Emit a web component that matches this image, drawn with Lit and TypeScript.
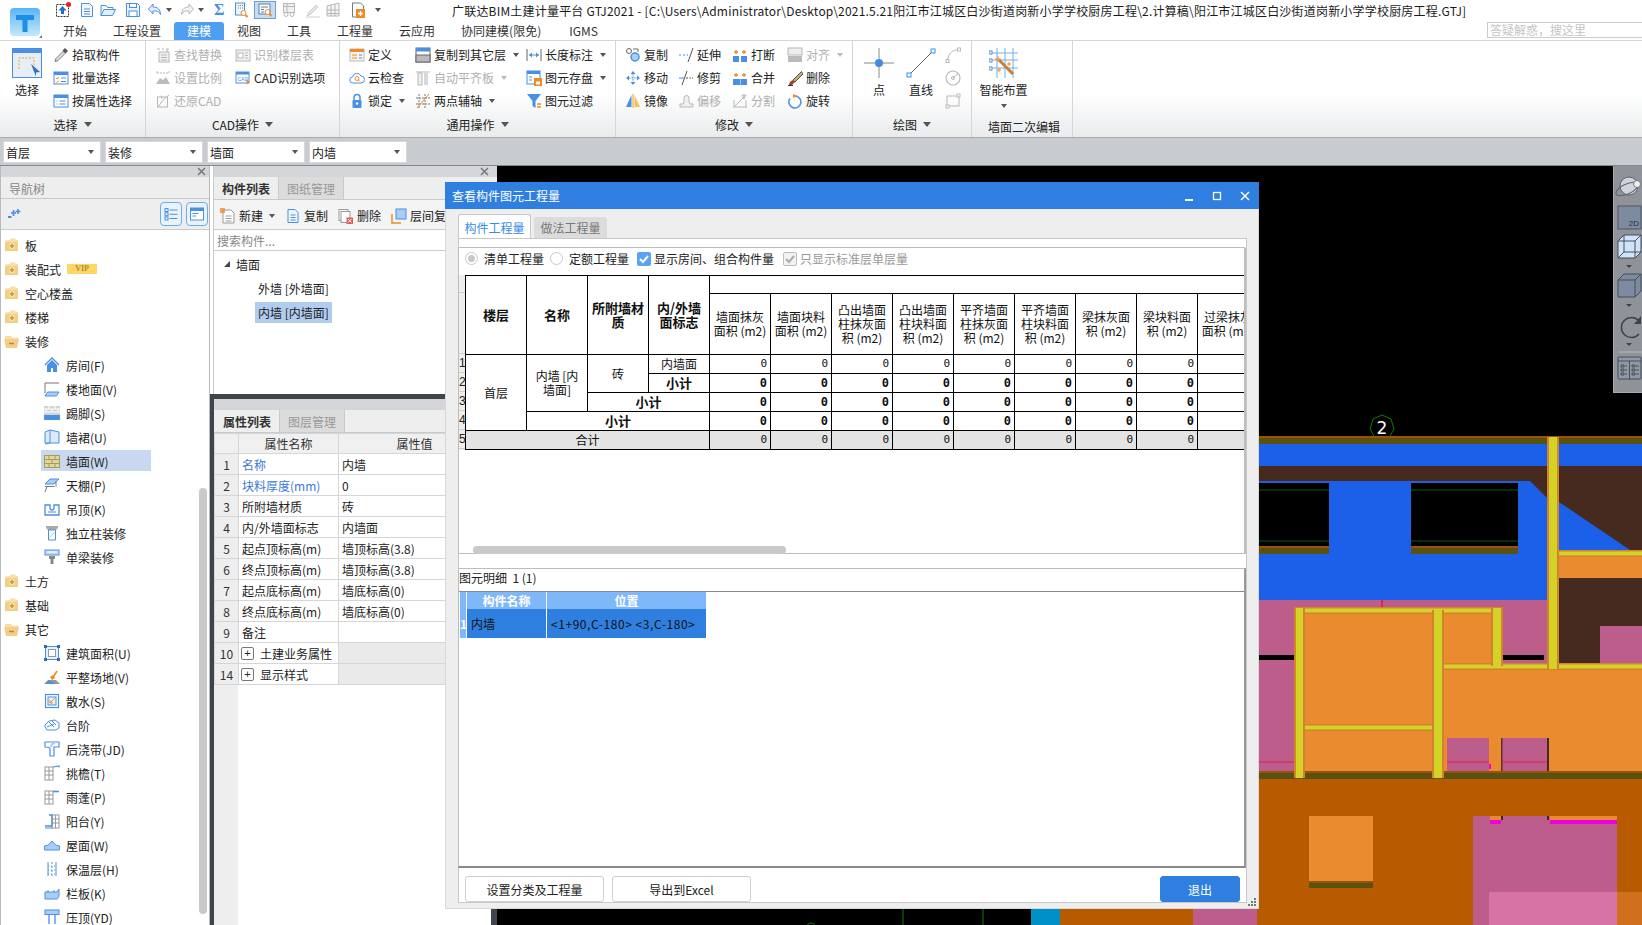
import { LitElement, html, svg, css, nothing } from "lit";
import { customElement } from "lit/decorators.js";

const B = "#4a90e2";
const L = "#a9cdf5";
const G = "#b8b8b8";
const O = "#f08a24";

// 16x16 icons, keyed by name
const ICONS: Record<string, unknown> = {
  upload: svg`<rect x="1.5" y="2.5" width="12" height="12" fill="#fff" stroke="#333" stroke-dasharray="2 1"/><path d="M7.5 4l4 4.5H9V12H6V8.5H3.5z" fill="#1a6fd4"/><circle cx="13.5" cy="2.5" r="2.5" fill="#e81c24"/>`,
  newdoc: svg`<path d="M2.5 1.5h8l3 3v10h-11z" fill="#f4f8fd" stroke="${B}"/><path d="M5 7h6M5 9.5h6M5 12h6" stroke="${B}"/>`,
  open: svg`<path d="M1 13.5v-10h5l1.5 2H13v2" fill="none" stroke="${B}"/><path d="M1 13.5l3-6h11.5l-3 6z" fill="#e4effb" stroke="${B}"/>`,
  save: svg`<path d="M1.5 1.5h11l2 2v11h-13z" fill="#eaf2fb" stroke="${B}"/><rect x="4.5" y="1.5" width="7" height="4" fill="#fff" stroke="${B}"/><rect x="4" y="9" width="8" height="5.5" fill="#fff" stroke="${B}"/>`,
  undo: svg`<path d="M6 2L1.5 7 6 12V9c4-.5 6 .5 7.5 3.5C13.5 7.5 10.5 5 6 5z" fill="#e6f0fb" stroke="${B}"/>`,
  redo: svg`<path d="M10 2l4.5 5L10 12V9C6 8.5 4 9.5 2.5 12.5 2.5 7.5 5.5 5 10 5z" fill="#f4f4f4" stroke="${G}"/>`,
  docfind: svg`<rect x="2.5" y="1" width="9" height="12" fill="#eef4fb" stroke="${B}"/><path d="M5 3.5h1M7 3.5h1M9 3.5h1M5 6h1M7 6h1M9 6h1" stroke="#6a87a8"/><circle cx="10.5" cy="11" r="2.5" fill="#fff" stroke="${O}"/><path d="M12.5 13l2 2" stroke="${O}" stroke-width="2"/>`,
  docfindA: svg`<rect x="2" y="2" width="11" height="10" fill="#fff" stroke="#5c7fa5"/><path d="M4 5h7M4 7.5h3M4 10h3" stroke="#5c7fa5"/><circle cx="10.5" cy="10" r="2.5" fill="#fff" stroke="${O}"/><path d="M12.5 12l2 2" stroke="${O}" stroke-width="2"/>`,
  glasses: svg`<rect x="2.5" y="1.5" width="11" height="9" fill="#f0f0f0" stroke="${G}"/><path d="M2.5 4.5h11M6 1.5v9" stroke="${G}"/><circle cx="5" cy="12.5" r="2" fill="#fff" stroke="${G}"/><circle cx="11" cy="12.5" r="2" fill="#fff" stroke="${G}"/>`,
  pencilG: svg`<path d="M2 14l2-4 7-7 2 2-7 7z" fill="#e4e4e4" stroke="#cfcfcf"/><path d="M1 15h14" stroke="#cfcfcf"/>`,
  gridG: svg`<path d="M2 4l12-3v13H2zM2 8h12M2 11.5h12M6 3v11M10 2v12" fill="#f4f4f4" stroke="${G}"/>`,
  orangedoc: svg`<path d="M2.5 1h8l3 3v4h-4v7h-7z" fill="#fff" stroke="#777"/><rect x="6" y="7" width="9" height="9" fill="${O}"/><path d="M10.5 9v5M8 11.5h5" stroke="#fff" stroke-width="1.5"/>`,
  pick: svg`<path d="M2 14.5l1-3 7-7 2 2-7 7z" fill="#e2e2e2" stroke="#777"/><path d="M9.5 3.5L12 1l3 3-2.5 2.5z" fill="#555"/>`,
  batch: svg`<rect x="1" y="2" width="14" height="12" fill="#fff" stroke="${B}"/><rect x="1" y="2" width="14" height="3" fill="${B}"/><path d="M3 8l1 1 2-2M3 11.5l1 1 2-2" fill="none" stroke="${O}"/><path d="M8 8h5M8 11.5h5" stroke="${B}"/>`,
  attr: svg`<rect x="1" y="2" width="14" height="12" fill="#fff" stroke="${B}"/><rect x="1" y="2" width="14" height="3" fill="${B}"/><path d="M3.5 8h1M3.5 11h1M6.5 8h6M6.5 11h6" stroke="${B}"/>`,
  findrep: svg`<path d="M2 2h3M7 2h2M11 2h3" stroke="${G}"/><path d="M12 2v3" stroke="${G}"/><rect x="4" y="5" width="10" height="10" fill="#eee" stroke="${G}"/><path d="M6 8h6M6 10.5h6M6 13h6" stroke="${G}"/>`,
  floortbl: svg`<rect x="1" y="3" width="14" height="11" fill="#f2f2f2" stroke="${G}"/><rect x="3" y="6" width="5" height="5" fill="#fff" stroke="${G}"/><path d="M10 6h3M10 8.5h3M10 11h3" stroke="${G}"/>`,
  scale: svg`<path d="M2 1v3M14 1v3M2 3h12" stroke="${G}" stroke-dasharray="2 1"/><path d="M1 14l4-6 3 2 3-3 4 7z" fill="#bcbcbc"/>`,
  cadopt: svg`<rect x="1" y="2" width="13" height="11" fill="#fff" stroke="${B}"/><rect x="1" y="2" width="13" height="2.5" fill="${B}"/><text x="2.5" y="10.5" font-size="5" font-family="Liberation Sans" fill="${B}">CAD</text><path d="M11 9l4 3-2 .5-1 2.5z" fill="${O}"/>`,
  restore: svg`<rect x="2.5" y="4" width="10" height="10" fill="none" stroke="${G}"/><path d="M14 2L8 7 3 14" fill="none" stroke="${G}"/><path d="M8 4L6 2v4z" fill="${G}"/>`,
  define: svg`<rect x="1" y="2" width="14" height="12" fill="#f4f4f4" stroke="#bbb"/><rect x="1" y="2" width="14" height="3" fill="${O}"/><path d="M3 8h5M3 11h5" stroke="${O}"/><path d="M10 8h3M10 11h3" stroke="${B}"/>`,
  cloud: svg`<path d="M4 13a3 3 0 0 1-.5-6 4.5 4.5 0 0 1 8.5-1 3.5 3.5 0 0 1 0 7z" fill="#fff" stroke="${B}"/><circle cx="8" cy="8.5" r="2" fill="none" stroke="${O}"/><path d="M9.5 10l1.5 1.5" stroke="${O}"/>`,
  lock: svg`<path d="M5 7V4.5a3 3 0 0 1 6 0V7" fill="none" stroke="${B}" stroke-width="1.5"/><rect x="3.5" y="7" width="9" height="8" rx="1" fill="${B}"/><circle cx="8" cy="10.5" r="1.2" fill="#fff"/>`,
  copyfloor: svg`<rect x="1" y="1" width="14" height="14" fill="#fff" stroke="#666"/><rect x="1" y="1" width="14" height="3.5" fill="${B}"/><rect x="1" y="8" width="14" height="7" fill="#bbb" stroke="#666"/>`,
  autoalign: svg`<path d="M1 2h14" stroke="${G}"/><rect x="3" y="3" width="4" height="12" fill="#eee" stroke="${G}"/><rect x="9" y="3" width="4" height="12" fill="#d8d8d8"/>`,
  twoaxis: svg`<path d="M1 5h14M1 11h14M4 1v14M10 1v14" stroke="#777" stroke-dasharray="2 1"/><path d="M2 15L14 1" stroke="${O}"/>`,
  dim: svg`<path d="M1 2v12M15 2v12" stroke="#666"/><path d="M3 8h10" stroke="${B}"/><path d="M3 8l3-2.5v5zM13 8l-3-2.5v5z" fill="${B}"/>`,
  store: svg`<rect x="1" y="1" width="13" height="13" fill="#fff" stroke="${B}"/><rect x="1" y="1" width="13" height="3" fill="${B}"/><path d="M3 7h3M3 10h3" stroke="${B}"/><rect x="8" y="8" width="8" height="8" fill="${O}"/><rect x="10" y="11.5" width="4" height="3" fill="#fff"/>`,
  filter: svg`<path d="M1 1h14L9.5 8v7l-3-2V8z" fill="${B}"/><path d="M11 11h4M11 14h4" stroke="${O}" stroke-width="1.5"/>`,
  copy: svg`<circle cx="4" cy="4" r="2.5" fill="none" stroke="#666"/><circle cx="10" cy="10" r="4" fill="${L}" stroke="${B}" stroke-width="1.5"/><path d="M8 2h5v3" fill="none" stroke="#666"/>`,
  extend: svg`<path d="M1 8h2M5 8h2M8.5 8H10" stroke="${B}"/><path d="M10 15l5-14" stroke="#555"/>`,
  breakI: svg`<rect x="1" y="9" width="6" height="6" fill="${B}"/><rect x="9" y="9" width="6" height="6" fill="${B}"/><path d="M4 3v4M2 5h4M12 3v4M10 5h4" stroke="${O}" stroke-width="1.3"/>`,
  align: svg`<rect x="1" y="1" width="14" height="7" fill="#eee" stroke="${G}"/><rect x="1" y="9" width="14" height="6" fill="#bbb"/>`,
  move: svg`<path d="M8 1l2.5 3h-5zM8 15l2.5-3h-5zM1 8l3-2.5v5zM15 8l-3-2.5v5z" fill="${B}"/><path d="M8 4v8M4 8h8" stroke="${B}" stroke-dasharray="1.5 1"/>`,
  trim: svg`<path d="M8 8h2M11.5 8H13M14 8h1" stroke="#555"/><path d="M1 8h5" stroke="${B}"/><path d="M4 15L9 1" stroke="#555"/>`,
  merge: svg`<rect x="1" y="9" width="7" height="6" fill="${B}"/><rect x="8.5" y="9" width="6.5" height="6" fill="${B}"/><path d="M4 3v4M2 5h4M12 3v4M10 5h4" stroke="${O}" stroke-width="1.3"/>`,
  erase: svg`<path d="M14.5 1.5L6 10l2 2 8-8z" fill="#c8a878" stroke="#555"/><path d="M6 10l2 2-3 3H2c0-2 1-4 4-5z" fill="#a8441a"/><path d="M1 15.5h5" stroke="#333"/>`,
  mirror: svg`<path d="M1 14L6.5 2v12z" fill="${B}"/><path d="M9.5 2L15 14H9.5z" fill="#f6c350"/><path d="M8 1v14" stroke="#e8a020"/>`,
  offset: svg`<path d="M2 14v-3h3l1-2V5a2.5 2.5 0 0 1 5 0v4l1 2h3v3z" fill="#f0f0f0" stroke="${G}"/>`,
  split: svg`<path d="M1 14h14M2 7v7M14 7v7M2 14L14 2" stroke="${G}"/><path d="M10 2h4l-2 4z" fill="#ddd" stroke="${G}"/>`,
  rotate: svg`<path d="M8 3a6 6 0 1 1-5 2.5" fill="none" stroke="${B}" stroke-width="1.5"/><path d="M6 1l5 2-5 2z" fill="${O}"/>`,
  arcS: svg`<path d="M2.5 14C3 6 8 3 13.5 2.5" fill="none" stroke="${G}"/><rect x="1" y="12.5" width="3" height="3" fill="#fff" stroke="${G}"/><rect x="12.5" y="1" width="3" height="3" fill="#fff" stroke="${G}"/>`,
  circS: svg`<circle cx="8" cy="8" r="7" fill="#fff" stroke="${G}" stroke-width="1.2"/><circle cx="8" cy="8" r="1.5" fill="none" stroke="${G}"/><path d="M8 8l5-4" stroke="${G}"/>`,
  rectS: svg`<rect x="2" y="3" width="12" height="10" fill="none" stroke="${G}"/><rect x="1" y="12" width="3" height="3" fill="#fff" stroke="${G}"/><rect x="12" y="1" width="3" height="3" fill="#fff" stroke="${G}"/>`,
  pin: svg`<path d="M6.5 4v6M4 7h5M11 3v5M8.5 5.5h5" stroke="${B}" stroke-width="1.6"/><path d="M1 10h3.5v2H1z" fill="${B}"/>`,
  listBtn: svg`<rect x="2" y="2.5" width="3" height="3" fill="none" stroke="${B}"/><rect x="2" y="6.8" width="3" height="3" fill="none" stroke="${B}"/><rect x="2" y="11" width="3" height="3" fill="none" stroke="${B}"/><path d="M6.5 4h8M6.5 8.3h8M6.5 12.5h8" stroke="${B}"/>`,
  formBtn: svg`<rect x="1.5" y="2" width="13" height="12" fill="#fff" stroke="${B}"/><rect x="1.5" y="2" width="13" height="3" fill="${B}"/><path d="M3.5 7.5h6M3.5 10H7" stroke="${B}"/>`,
  folderC: svg`<path d="M1 4.5V14h13V4.5z" fill="#f2cf84"/><path d="M1 4.5L2 3h4l1-1.5h4L12 3h2v1.5z" fill="#f6deaa"/><rect x="5.5" y="6" width="5" height="6" fill="#f8e2ac"/><path d="M6 9h4M8 7v4" stroke="#c39a3e" stroke-width="1.5"/>`,
  folderO: svg`<path d="M1 3h6l1 1.5h6V7H1z" fill="#f6deaa"/><path d="M0 6h15l-2 9H2z" fill="#f2cf84"/><path d="M5 10.5h5" stroke="#b08c3c" stroke-width="1.5"/>`,
  room: svg`<path d="M1 8l7-7 7 7" fill="none" stroke="${B}" stroke-width="1.3"/><path d="M3 8v7h4v-4h2v4h4V8L8 3z" fill="${B}"/>`,
  floor: svg`<path d="M1 12V2h14" fill="none" stroke="#777"/><path d="M3.5 11H15l-2.5 4H1z" fill="${L}" stroke="${B}"/>`,
  skirt: svg`<rect x="0" y="1" width="16" height="9" fill="#d4d4d4"/><path d="M0 4h16M0 7h16M5 1v3M11 1v3M2 4v3M8 4v3M14 4v3" stroke="#fff"/><rect x="0" y="10" width="16" height="5" fill="${B}"/>`,
  dado: svg`<path d="M1 3l5-2 9 2v11H1z" fill="#dce9f9" stroke="${B}"/><path d="M6 1v13l-5 1" fill="none" stroke="${B}"/>`,
  wall: svg`<rect x=".5" y="2.5" width="15" height="12" fill="#d8d8a8" stroke="#b09a4e"/><path d="M.5 6.5h15M.5 10.5h15M5 2.5v4M11 2.5v4M8 6.5v4M5 10.5v4M11 10.5v4" stroke="#b09a4e"/>`,
  ceiling: svg`<path d="M1 7l5-5h9l-5 5z" fill="${L}" stroke="${B}"/><path d="M1 9.5h9.5M3 9.5L1 15M12 4v5.5" stroke="#777"/>`,
  suspend: svg`<path d="M1 4h5v3a2 2 0 0 0 4 0V4h5v10H1z" fill="#fff" stroke="${B}" stroke-width="1.3"/><path d="M4 11h8" stroke="${B}"/>`,
  column: svg`<path d="M2 1h12v2l-2 2H4L2 3z" fill="#aaa"/><path d="M4.5 5h7v10h-7z" fill="#fff" stroke="${B}"/><path d="M5 13l6-6" stroke="${L}"/>`,
  beam: svg`<rect x="1" y="1" width="14" height="5" fill="#c4d8f0" stroke="${B}"/><path d="M3 3h10" stroke="#fff"/><rect x="5" y="7" width="6" height="3" fill="#888"/><rect x="6.5" y="10" width="3" height="5" fill="#888"/>`,
  area: svg`<rect x="1.5" y="1.5" width="13" height="13" fill="#e6f0fb" stroke="${B}"/><rect x="4.5" y="4.5" width="7" height="7" fill="#fff" stroke="#999"/><rect x="0" y="0" width="3" height="3" fill="#3768a8"/><rect x="13" y="0" width="3" height="3" fill="#3768a8"/><rect x="0" y="13" width="3" height="3" fill="#3768a8"/><rect x="13" y="13" width="3" height="3" fill="#3768a8"/>`,
  level: svg`<path d="M0 15h16l-4-4H4z" fill="#999"/><path d="M1 15l4-4 3 2 4 2z" fill="${B}"/><path d="M8 10l5-8" stroke="${O}" stroke-width="1.6"/><path d="M6 8l3-2 2 3-3 2z" fill="${O}"/>`,
  apron: svg`<rect x="1.5" y="1.5" width="13" height="13" fill="#fff" stroke="${B}" stroke-width="1.2"/><rect x="4" y="4" width="8" height="8" fill="#e6f0fb" stroke="${B}"/><path d="M10.5 5.5L6 10M6 7v3h3" fill="none" stroke="${O}"/>`,
  step: svg`<path d="M1 8l4-4 6-1 4 3v5l-3 2H3l-2-3z" fill="#fff" stroke="${B}"/><path d="M5 5l5 5M8 4l4 4M3 10l7-3" stroke="${B}"/>`,
  strip: svg`<path d="M1 1h14v5H10v9H6V8C6 6 4 6 1 6z" fill="#fff" stroke="${B}" stroke-width="1.2"/><path d="M7 6c0-2 2-4 4-4" stroke="${L}" stroke-width="2" fill="none"/>`,
  eave: svg`<rect x="1" y="2" width="8" height="13" fill="#fff" stroke="#999"/><path d="M5 2v13M1 6h8M1 10h8" stroke="#999"/><path d="M9 2l6-1v1.5" fill="none" stroke="${B}" stroke-width="1.2"/>`,
  canopy: svg`<rect x="1" y="2" width="8" height="13" fill="#fff" stroke="#999"/><path d="M5 2v13M1 6h8M1 10h8" stroke="#999"/><path d="M9 2.5h6" stroke="${B}" stroke-width="1.6"/>`,
  balcony: svg`<rect x="8" y="2" width="7" height="13" fill="#fff" stroke="#999"/><path d="M11.5 2v13M8 6h7M8 10h7" stroke="#999"/><path d="M5 2h3v11H1" fill="none" stroke="${B}" stroke-width="1.4"/><path d="M1 15h7" stroke="${B}"/>`,
  roof: svg`<path d="M.5 13V9l4-1L8 4l3.5 4 4 1v4z" fill="${L}" stroke="${B}"/>`,
  insul: svg`<path d="M4 1v14M12 1v14" stroke="${B}"/><path d="M8 1v14" stroke="${B}" stroke-dasharray="2 2"/><path d="M4 5h8M4 9h8M4 13h8" stroke="${B}" stroke-dasharray="1 2"/>`,
  panel: svg`<path d="M1 7h12c1-2 2-3 2-3v7c-1 1-1 3-2 3H1z" fill="${L}" stroke="${B}"/><path d="M4 7V5M10 7V5" stroke="${B}"/>`,
  coping: svg`<rect x="1" y="1" width="14" height="4.5" fill="${L}" stroke="${B}"/><path d="M5 5.5V15M11 5.5V15" stroke="${B}" stroke-width="1.3"/>`,
  newI: svg`<path d="M3 2h8l3 3v10H3z" fill="#fff" stroke="#999"/><path d="M5.5 8h6M5.5 10.5h6M5.5 13h6" stroke="#999"/><rect x="0" y="0" width="5" height="5" fill="${O}" opacity=".75"/>`,
  copyI: svg`<path d="M3 1.5h7l3 3v10H3z" fill="#f0f6fd" stroke="${B}"/><path d="M5.5 7h5M5.5 9.5h5M5.5 12h5" stroke="${B}"/>`,
  delI: svg`<rect x="1" y="1.5" width="9" height="11" fill="#fff" stroke="#999"/><rect x="3" y="3.5" width="9" height="11" fill="#fff" stroke="#999"/><rect x="8.5" y="9.5" width="6.5" height="6.5" fill="#e05a5a"/><path d="M10 11l3.5 3.5M13.5 11L10 14.5" stroke="#fff"/>`,
  layerI: svg`<path d="M1 6v9h9" fill="none" stroke="${O}" stroke-width="1.5"/><rect x="5" y="1" width="10" height="10" fill="#a8ccf5" stroke="${B}"/>`,
};

const ico = (name: string, cls = "i") =>
  html`<svg class=${cls} viewBox="0 0 16 16" aria-hidden="true">${ICONS[name]}</svg>`;

const closeX = html`<svg class="x" viewBox="0 0 9 9" aria-hidden="true">
  <path d="M1 1l7 7M8 1L1 8" stroke="#777" stroke-width="1.5" />
</svg>`;

const BASE = css`
  :host,
  * {
    box-sizing: border-box;
  }
  .i {
    width: 16px;
    height: 16px;
    flex: none;
    display: block;
  }
  .caret {
    display: inline-block;
    flex: none;
    width: 0;
    height: 0;
    border-left: 3px solid transparent;
    border-right: 3px solid transparent;
    border-top: 4px solid #555;
  }
`;

type RibbonItem = { i: string; t: string; off?: boolean; caret?: boolean } | null;

const QUICK: string[] = [
  "upload", "newdoc", "open", "save", "undo", "@", "redo", "@", "#", "docfind", "docfindA", "glasses", "pencilG", "gridG", "orangedoc", "@",
];

const MENU = ["开始", "工程设置", "建模", "视图", "工具", "工程量", "云应用", "协同建模(限免)", "IGMS"];

const SEL: RibbonItem[] = [
  { i: "pick", t: "拾取构件" },
  { i: "batch", t: "批量选择" },
  { i: "attr", t: "按属性选择" },
];
const CAD: RibbonItem[] = [
  { i: "findrep", t: "查找替换", off: true },
  { i: "scale", t: "设置比例", off: true },
  { i: "restore", t: "还原CAD", off: true },
  { i: "floortbl", t: "识别楼层表", off: true },
  { i: "cadopt", t: "CAD识别选项" },
  null,
];
const COMMON: RibbonItem[] = [
  { i: "define", t: "定义" },
  { i: "cloud", t: "云检查" },
  { i: "lock", t: "锁定", caret: true },
  { i: "copyfloor", t: "复制到其它层", caret: true },
  { i: "autoalign", t: "自动平齐板", off: true, caret: true },
  { i: "twoaxis", t: "两点辅轴", caret: true },
  { i: "dim", t: "长度标注", caret: true },
  { i: "store", t: "图元存盘", caret: true },
  { i: "filter", t: "图元过滤" },
];
const MODIFY: RibbonItem[] = [
  { i: "copy", t: "复制" },
  { i: "move", t: "移动" },
  { i: "mirror", t: "镜像" },
  { i: "extend", t: "延伸" },
  { i: "trim", t: "修剪" },
  { i: "offset", t: "偏移", off: true },
  { i: "breakI", t: "打断" },
  { i: "merge", t: "合并" },
  { i: "split", t: "分割", off: true },
  { i: "align", t: "对齐", off: true, caret: true },
  { i: "erase", t: "删除" },
  { i: "rotate", t: "旋转" },
];

@customElement("ribbon-bar")
export class RibbonBar extends LitElement {
  static styles = [
    BASE,
    css`
      :host {
        display: block;
        font-size: 12px;
        color: #222;
      }
      .top {
        display: flex;
        height: 41px;
        background: #fff;
        border-bottom: 1px solid #d4d6d8;
      }
      .logo {
        width: 49px;
        flex: none;
        padding: 8px 0 0 10px;
      }
      .logo svg {
        display: block;
        width: 33px;
        height: 31px;
      }
      .head {
        flex: 1;
        min-width: 0;
      }
      .row1 {
        display: flex;
        height: 22px;
        align-items: center;
        padding: 0 0 2px 6px;
      }
      .quick {
        display: grid;
        grid-template-columns: 24px 21px 25px 22px 19px 13px 19px 16px 19px 21px 27px 24px 20px 25px 25px 22px;
        width: 397px;
        flex: none;
        align-items: center;
      }
      .sigma {
        font: bold 16px "Liberation Serif", serif;
        color: #4a90e2;
      }
      .on {
        width: 22px;
        height: 18px;
        background: #c5dcf5;
        border: 1px solid #6f9fd0;
        display: flex;
        align-items: center;
        justify-content: center;
      }
      .title {
        white-space: nowrap;
        font-size: 12px;
        letter-spacing: 0.2px;
        color: #1a1a1a;
      }
      .row2 {
        display: flex;
        height: 18px;
        align-items: stretch;
        padding-left: 1px;
      }
      .menu {
        padding: 0 13px;
        line-height: 18px;
        color: #333;
      }
      .menu.active {
        background: #4f9ff0;
        color: #fff;
        border-radius: 3px 3px 0 0;
        width: 50px;
      }
      .menu.last {
        padding-left: 15px;
      }
      .search {
        margin-left: auto;
        width: 155px;
        border: 1px solid #ccc;
        border-right: 0;
        margin-bottom: 2px;
        color: #c4c4c4;
        line-height: 14px;
        padding-left: 2px;
      }
      .ribbon {
        display: flex;
        height: 97px;
        background: linear-gradient(#fff 55%, #e9ebec);
        border-bottom: 1px solid #a8abae;
      }
      .grp {
        position: relative;
        flex: none;
        display: flex;
        flex-direction: column;
        padding-top: 2px;
        border-right: 1px solid #d4d6d8;
      }
      .body {
        height: 69px;
        display: grid;
        grid-auto-flow: column;
        grid-template-rows: repeat(3, 23px);
        justify-content: start;
      }
      .g-sel {
        width: 146px;
      }
      .g-sel .body {
        padding-left: 12px;
        grid-template-columns: 41px auto;
      }
      .g-cad {
        width: 194px;
      }
      .g-cad .body {
        padding-left: 9px;
        grid-template-columns: 80px auto;
      }
      .g-com {
        width: 276px;
      }
      .g-com .body {
        padding-left: 9px;
        grid-template-columns: 66px 111px auto;
      }
      .g-mod {
        width: 237px;
      }
      .g-mod .body {
        padding-left: 9px;
        grid-template-columns: 53px 54px 55px auto;
      }
      .g-draw {
        width: 119px;
      }
      .g-draw .body {
        padding-left: 11px;
        grid-template-columns: 42px 39px auto;
      }
      .g-smart {
        width: 101px;
      }
      .g-smart .body {
        padding-left: 7px;
      }
      .it {
        display: flex;
        align-items: center;
        gap: 3px;
        white-space: nowrap;
      }
      .it .caret {
        margin-left: 4px;
      }
      .off {
        color: #b0b0b0;
      }
      .off .caret {
        border-top-color: #bbb;
      }
      .big {
        grid-row: 1 / span 3;
        display: flex;
        flex-direction: column;
        align-items: center;
        padding-top: 5px;
        width: 30px;
      }
      .big svg {
        width: 30px;
        height: 30px;
        display: block;
        flex: none;
      }
      .big span {
        margin-top: 3px;
        white-space: nowrap;
        line-height: 17px;
      }
      .g-smart .big {
        width: 49px;
      }
      .g-smart .big .caret {
        margin-top: 6px;
      }
      .lab {
        height: 24px;
        display: flex;
        align-items: center;
        justify-content: center;
        gap: 6px;
      }
      .lab .caret {
        border-left-width: 4px;
        border-right-width: 4px;
        border-top-width: 5px;
      }
      .g-smart .lab {
        padding: 5px 0 0 4px;
      }
      .smalls {
        grid-row: 1 / span 3;
        display: grid;
        grid-template-rows: repeat(3, 23px);
        align-items: center;
      }
      .bar {
        height: 28px;
        background: #c8cbcf;
        border-bottom: 1px solid #85888c;
        display: flex;
        gap: 4px;
        padding: 3px 0 0 3px;
      }
      .combo {
        width: 98px;
        height: 22px;
        background: #fff;
        border: 1px solid #d8d8d8;
        display: flex;
        align-items: center;
        justify-content: space-between;
        padding: 0 6px 0 2px;
      }
    `,
  ];

  item(it: RibbonItem) {
    if (!it) return html`<div></div>`;
    return html`<div class="it ${it.off ? "off" : ""}">
      ${ico(it.i)}<span>${it.t}</span>${it.caret ? html`<i class="caret"></i>` : nothing}
    </div>`;
  }

  quick(q: string) {
    if (q === "@") return html`<i class="caret"></i>`;
    if (q === "#") return html`<span class="sigma">Σ</span>`;
    if (q === "docfindA") return html`<div class="on">${ico("docfindA")}</div>`;
    return ico(q);
  }

  group(cls: string, label: string, items: RibbonItem[], lead: unknown = nothing) {
    return html`<div class="grp ${cls}">
      <div class="body">${lead}${items.map((i) => this.item(i))}</div>
      <div class="lab">${label}<i class="caret"></i></div>
    </div>`;
  }

  render() {
    const selectIcon = svg`<rect x=".5" y=".5" width="29" height="29" fill="#e8eef8" stroke="#4a90e2"/><rect x="0" y="0" width="30" height="5" fill="#4a90e2"/><path d="M7 21V10h15v8" fill="none" stroke="#f0a030" stroke-dasharray="2 1.5"/><path d="M19 16l9 8-4 .5v4z" fill="#3070c0"/>`;
    const pointIcon = svg`<path d="M15 0v30M0 15h30" stroke="#888"/><circle cx="15" cy="15" r="4" fill="#3f8fe0"/>`;
    const lineIcon = svg`<path d="M3 27L27 3" stroke="#666"/><rect x="1" y="25" width="4" height="4" fill="#fff" stroke="#3f8fe0"/><rect x="25" y="1" width="4" height="4" fill="#fff" stroke="#3f8fe0"/>`;
    const smartIcon = svg`<path d="M1 5h28M1 12h28M1 20h28M8 0v30M16 0v30M24 0v30" stroke="#6faee8"/><path d="M10 12l14 14" stroke="#c88030" stroke-width="3"/><path d="M9 8v6M6 11h6M18 16h4M20 14v4M8 22h4M10 20v4" stroke="#f08a24"/><rect x="0" y="3" width="3" height="3" fill="#fff" stroke="#4a90e2"/><rect x="0" y="11" width="3" height="3" fill="#fff" stroke="#4a90e2"/><rect x="0" y="19" width="3" height="3" fill="#fff" stroke="#4a90e2"/>`;
    return html`
      <div class="top">
        <div class="logo">
          <svg viewBox="0 0 33 31" aria-hidden="true">
            <defs>
              <linearGradient id="lg" x1="0" y1="0" x2="0" y2="1">
                <stop offset="0" stop-color="#58b4f4" />
                <stop offset="1" stop-color="#c4e9fc" />
              </linearGradient>
            </defs>
            <rect width="30" height="28" rx="4" fill="url(#lg)" />
            <path d="M6 7h18v5h-6.5v12h-5V12H6z" fill="#1c8ee8" />
            <path d="M32 27v3h-3z" fill="#777" />
          </svg>
        </div>
        <div class="head">
          <div class="row1">
            <div class="quick">${QUICK.map((q) => this.quick(q))}</div>
            <div class="title">
              广联达BIM土建计量平台 GTJ2021 - [C:\\Users\\Administrator\\Desktop\\2021.5.21阳江市江城区白沙街道岗新小学学校厨房工程\\2.计算稿\\阳江市江城区白沙街道岗新小学学校厨房工程.GTJ]
            </div>
          </div>
          <div class="row2">
            ${MENU.map(
              (m) =>
                html`<div class="menu ${m === "建模" ? "active" : ""} ${m === "IGMS" ? "last" : ""}">${m}</div>`,
            )}
            <div class="search">答疑解惑，搜这里</div>
          </div>
        </div>
      </div>
      <div class="ribbon">
        ${this.group(
          "g-sel",
          "选择",
          SEL,
          html`<div class="big"><svg viewBox="0 0 30 30" aria-hidden="true">${selectIcon}</svg><span>选择</span></div>`,
        )}
        ${this.group("g-cad", "CAD操作", CAD)} ${this.group("g-com", "通用操作", COMMON)}
        ${this.group("g-mod", "修改", MODIFY)}
        <div class="grp g-draw">
          <div class="body">
            <div class="big"><svg viewBox="0 0 30 30" aria-hidden="true">${pointIcon}</svg><span>点</span></div>
            <div class="big"><svg viewBox="0 0 30 30" aria-hidden="true">${lineIcon}</svg><span>直线</span></div>
            <div class="smalls">${ico("arcS")}${ico("circS")}${ico("rectS")}</div>
          </div>
          <div class="lab">绘图<i class="caret"></i></div>
        </div>
        <div class="grp g-smart">
          <div class="body">
            <div class="big">
              <svg viewBox="0 0 30 30" aria-hidden="true">${smartIcon}</svg><span>智能布置</span><i class="caret"></i>
            </div>
          </div>
          <div class="lab">墙面二次编辑</div>
        </div>
      </div>
      <div class="bar">
        ${["首层", "装修", "墙面", "内墙"].map(
          (c) => html`<div class="combo"><span>${c}</span><i class="caret"></i></div>`,
        )}
      </div>
    `;
  }
}

const TREE: { i: string; t: string; leaf?: boolean; vip?: boolean; sel?: boolean }[] = [
  { i: "folderC", t: "板" },
  { i: "folderC", t: "装配式", vip: true },
  { i: "folderC", t: "空心楼盖" },
  { i: "folderC", t: "楼梯" },
  { i: "folderO", t: "装修" },
  { i: "room", t: "房间(F)", leaf: true },
  { i: "floor", t: "楼地面(V)", leaf: true },
  { i: "skirt", t: "踢脚(S)", leaf: true },
  { i: "dado", t: "墙裙(U)", leaf: true },
  { i: "wall", t: "墙面(W)", leaf: true, sel: true },
  { i: "ceiling", t: "天棚(P)", leaf: true },
  { i: "suspend", t: "吊顶(K)", leaf: true },
  { i: "column", t: "独立柱装修", leaf: true },
  { i: "beam", t: "单梁装修", leaf: true },
  { i: "folderC", t: "土方" },
  { i: "folderC", t: "基础" },
  { i: "folderO", t: "其它" },
  { i: "area", t: "建筑面积(U)", leaf: true },
  { i: "level", t: "平整场地(V)", leaf: true },
  { i: "apron", t: "散水(S)", leaf: true },
  { i: "step", t: "台阶", leaf: true },
  { i: "strip", t: "后浇带(JD)", leaf: true },
  { i: "eave", t: "挑檐(T)", leaf: true },
  { i: "canopy", t: "雨蓬(P)", leaf: true },
  { i: "balcony", t: "阳台(Y)", leaf: true },
  { i: "roof", t: "屋面(W)", leaf: true },
  { i: "insul", t: "保温层(H)", leaf: true },
  { i: "panel", t: "栏板(K)", leaf: true },
  { i: "coping", t: "压顶(YD)", leaf: true },
];

@customElement("nav-tree")
export class NavTree extends LitElement {
  static styles = [
    BASE,
    css`
      :host {
        display: block;
        position: relative;
        height: 100%;
        font-size: 12px;
        color: #222;
        border-left: 1px solid #b8babd;
        border-right: 1px solid #b8babd;
        overflow: hidden;
        background: #fff;
      }
      .hd {
        height: 11px;
        background: #d4d6da;
        display: flex;
        align-items: center;
        justify-content: flex-end;
        padding-right: 3px;
      }
      .x {
        width: 9px;
        height: 9px;
        display: block;
      }
      .name {
        height: 22px;
        line-height: 23px;
        background: #eee;
        border-bottom: 1px solid #c8cacd;
        padding-left: 8px;
        color: #888;
      }
      .tools {
        height: 31px;
        background: #eee;
        border-bottom: 1px solid #c8cacd;
        display: flex;
        align-items: center;
        padding: 0 1px 0 6px;
      }
      .btn {
        width: 22px;
        height: 24px;
        border: 1px solid #6aaef0;
        border-radius: 4px;
        background: #eaf3fc;
        margin-left: 4px;
        display: flex;
        align-items: center;
        justify-content: center;
      }
      .pin {
        margin-right: auto;
      }
      .list {
        padding-top: 3px;
      }
      .row {
        height: 24px;
        display: flex;
        align-items: center;
        gap: 5px;
        padding-left: 3px;
        white-space: nowrap;
      }
      .row.leaf {
        padding-left: 43px;
        gap: 6px;
      }
      .row.sel {
        background: linear-gradient(#c8d8f0, #c8d8f0) 40px 1px / 110px 21px no-repeat;
      }
      .vip {
        background: #ffd664;
        color: #b08a3a;
        font: bold 8px "Liberation Serif", serif;
        width: 30px;
        height: 10px;
        line-height: 10px;
        text-align: center;
        margin-left: 1px;
      }
      .scroll {
        position: absolute;
        right: 2px;
        top: 322px;
        width: 8px;
        height: 426px;
        border-radius: 4px;
        background: #c9c9c9;
      }
    `,
  ];

  render() {
    return html`
      <div class="hd">${closeX}</div>
      <div class="name">导航树</div>
      <div class="tools">
        <span class="pin">${ico("pin")}</span>
        <div class="btn">${ico("listBtn")}</div>
        <div class="btn">${ico("formBtn")}</div>
      </div>
      <div class="list">
        ${TREE.map(
          (r) => html`<div class="row ${r.leaf ? "leaf" : ""} ${r.sel ? "sel" : ""}">
            ${ico(r.i)}<span>${r.t}</span>${r.vip ? html`<span class="vip">VIP</span>` : nothing}
          </div>`,
        )}
      </div>
      <div class="scroll"></div>
    `;
  }
}

const PROPS: { n: string; k: string; v: string; blue?: boolean; group?: boolean }[] = [
  { n: "1", k: "名称", v: "内墙", blue: true },
  { n: "2", k: "块料厚度(mm)", v: "0", blue: true },
  { n: "3", k: "所附墙材质", v: "砖" },
  { n: "4", k: "内/外墙面标志", v: "内墙面" },
  { n: "5", k: "起点顶标高(m)", v: "墙顶标高(3.8)" },
  { n: "6", k: "终点顶标高(m)", v: "墙顶标高(3.8)" },
  { n: "7", k: "起点底标高(m)", v: "墙底标高(0)" },
  { n: "8", k: "终点底标高(m)", v: "墙底标高(0)" },
  { n: "9", k: "备注", v: "" },
  { n: "10", k: "土建业务属性", v: "", group: true },
  { n: "14", k: "显示样式", v: "", group: true },
];

@customElement("side-panels")
export class SidePanels extends LitElement {
  static styles = [
    BASE,
    css`
      :host {
        display: flex;
        flex-direction: column;
        height: 100%;
        font-size: 12px;
        color: #222;
        background: #fff;
      }
      .upper {
        height: 228px;
        margin-left: 3px;
        border-left: 1px solid #c8cacd;
        overflow: hidden;
      }
      .hd {
        height: 11px;
        background: #d4d6da;
        display: flex;
        align-items: center;
        justify-content: flex-end;
        padding-right: 8px;
      }
      .x {
        width: 9px;
        height: 9px;
        display: block;
      }
      .ptabs {
        display: flex;
        height: 23px;
        background: #eee;
        border-bottom: 1px solid #c8cacd;
      }
      .props .ptabs {
        padding-left: 1px;
      }
      .ptab {
        width: 65px;
        text-align: center;
        line-height: 24px;
        font-weight: bold;
        color: #333;
        border-right: 1px solid #c8cacd;
      }
      .ptab.dim {
        background: #dcdcdc;
        color: #999;
        font-weight: normal;
      }
      .tools {
        height: 30px;
        background: #f4f4f4;
        border-bottom: 1px solid #c8cacd;
        display: flex;
        align-items: center;
        padding: 2px 0 0 6px;
        white-space: nowrap;
      }
      .tool {
        display: flex;
        align-items: center;
        gap: 3px;
        width: 53px;
      }
      .tool.wide {
        width: 65px;
      }
      .tool .caret {
        margin-left: 3px;
      }
      .find {
        height: 21px;
        line-height: 22px;
        border-bottom: 1px solid #c8cacd;
        padding-left: 3px;
        color: #888;
      }
      .node {
        height: 24px;
        display: flex;
        align-items: center;
        white-space: nowrap;
      }
      .node.root {
        padding-left: 10px;
        margin-top: 1px;
        gap: 6px;
      }
      .tri {
        width: 0;
        height: 0;
        border-left: 6px solid transparent;
        border-bottom: 6px solid #444;
      }
      .node.kid {
        padding-left: 41px;
      }
      .node.kid span {
        padding: 0 3px;
        line-height: 21px;
      }
      .node.on span {
        background: #b0cdf0;
      }
      .hbar {
        height: 5px;
        background: #3f454d;
        flex: none;
      }
      .lower {
        flex: 1;
        display: flex;
        min-height: 0;
      }
      .vl {
        width: 4px;
        background: #3f454d;
        flex: none;
      }
      .vr {
        width: 6px;
        background: #3f454d;
        flex: none;
      }
      .props {
        flex: 1;
        min-width: 0;
      }
      .tbl {
        background: linear-gradient(90deg, #eee 24px, #fff 24px);
        height: 492px;
      }
      table {
        border-collapse: collapse;
        width: 100%;
        table-layout: fixed;
      }
      td,
      th {
        height: 21px;
        padding: 0 3px;
        border: 1px solid #d4d6d8;
        font-weight: normal;
        white-space: nowrap;
        overflow: hidden;
      }
      th {
        height: 20px;
        background: #f0f0f0;
        text-align: center;
        color: #333;
      }
      td.n {
        background: #eee;
        text-align: center;
        padding: 0;
        color: #333;
      }
      td.blue {
        color: #3a78d8;
      }
      td.gv {
        background: #eaeaea;
      }
      td.g {
        padding: 0 0 0 2px;
      }
      .g div {
        display: flex;
        align-items: center;
        gap: 6px;
      }
      .plus {
        width: 13px;
        height: 13px;
        border: 1px solid #777;
        border-radius: 2px;
        display: flex;
        align-items: center;
        justify-content: center;
        font: 11px "Liberation Sans", sans-serif;
      }
    `,
  ];

  render() {
    return html`
      <div class="upper">
        <div class="hd">${closeX}</div>
        <div class="ptabs">
          <div class="ptab">构件列表</div>
          <div class="ptab dim">图纸管理</div>
        </div>
        <div class="tools">
          <div class="tool wide">${ico("newI")}<span>新建</span><i class="caret"></i></div>
          <div class="tool">${ico("copyI")}<span>复制</span></div>
          <div class="tool">${ico("delI")}<span>删除</span></div>
          <div class="tool">${ico("layerI")}<span>层间复制</span></div>
        </div>
        <div class="find">搜索构件...</div>
        <div class="node root"><i class="tri"></i><span>墙面</span></div>
        <div class="node kid"><span>外墙 [外墙面]</span></div>
        <div class="node kid on"><span>内墙 [内墙面]</span></div>
      </div>
      <div class="hbar"></div>
      <div class="lower">
        <div class="vl"></div>
        <div class="props">
          <div class="hd"></div>
          <div class="ptabs">
            <div class="ptab">属性列表</div>
            <div class="ptab dim">图层管理</div>
          </div>
          <div class="tbl">
            <table>
              <colgroup>
                <col width="24" />
                <col width="100" />
                <col />
              </colgroup>
              <tr>
                <th></th>
                <th>属性名称</th>
                <th>属性值</th>
              </tr>
              ${PROPS.map((p) =>
                p.group
                  ? html`<tr>
                      <td class="n">${p.n}</td>
                      <td class="g">
                        <div><span class="plus">+</span><span>${p.k}</span></div>
                      </td>
                      <td class="gv"></td>
                    </tr>`
                  : html`<tr>
                      <td class="n">${p.n}</td>
                      <td class=${p.blue ? "blue" : ""}>${p.k}</td>
                      <td>${p.v}</td>
                    </tr>`,
              )}
            </table>
          </div>
        </div>
        <div class="vr"></div>
      </div>
    `;
  }
}

const HEADS = [
  ["墙面抹灰", "面积 (m2)"],
  ["墙面块料", "面积 (m2)"],
  ["凸出墙面", "柱抹灰面", "积 (m2)"],
  ["凸出墙面", "柱块料面", "积 (m2)"],
  ["平齐墙面", "柱抹灰面", "积 (m2)"],
  ["平齐墙面", "柱块料面", "积 (m2)"],
  ["梁抹灰面", "积 (m2)"],
  ["梁块料面", "积 (m2)"],
  ["过梁抹灰", "面积 (m2)"],
];

const cells = (cls = "") =>
  Array.from({ length: 9 }, (_, i) => html`<td class="num ${cls}">${i < 8 ? "0" : ""}</td>`);

@customElement("qty-dialog")
export class QtyDialog extends LitElement {
  static styles = [
    BASE,
    css`
      :host {
        display: flex;
        flex-direction: column;
        position: absolute;
        left: 445px;
        top: 182px;
        width: 814px;
        height: 727px;
        background: #eee;
        border: 1px solid #d6d8da;
        border-top: 0;
        font-size: 12px;
        color: #222;
      }
      .bar {
        height: 27px;
        flex: none;
        background: #2e7fe0;
        color: #fff;
        display: flex;
        align-items: center;
        padding-left: 7px;
        margin: 0 -1px;
      }
      .win {
        margin-left: auto;
        display: flex;
        align-items: center;
      }
      .win svg {
        width: 28px;
        height: 14px;
        display: block;
      }
      .tabs {
        height: 29px;
        flex: none;
        display: flex;
        align-items: flex-end;
        gap: 3px;
        padding-left: 12px;
      }
      .tab {
        width: 73px;
        height: 25px;
        background: #fff;
        color: #3a8ae8;
        text-align: center;
        line-height: 25px;
        border: 1px solid #c8c8c8;
        border-bottom: 0;
        border-radius: 3px 3px 0 0;
        margin-bottom: -1px;
        position: relative;
      }
      .tab.dim {
        height: 21px;
        line-height: 21px;
        background: #dcdcdc;
        color: #777;
        border: 0;
        margin-bottom: 0;
      }
      .panel {
        width: 789px;
        height: 665px;
        margin-left: 12px;
        background: #fff;
        border: 1px solid #c8c8c8;
        padding-top: 8px;
        position: relative;
      }
      .upper {
        height: 307px;
        margin-left: -1px;
        border: 1px solid #bdbdbd;
        border-width: 1px 2px 1px 1px;
        border-radius: 2px 2px 0 0;
        position: relative;
      }
      .opts {
        height: 27px;
        display: flex;
        align-items: center;
        padding: 0 0 6px 6px;
        white-space: nowrap;
      }
      .radio {
        width: 13px;
        height: 13px;
        border: 1px solid #c8c8c8;
        border-radius: 50%;
        margin-right: 6px;
        display: flex;
        align-items: center;
        justify-content: center;
        flex: none;
      }
      .radio.on::after {
        content: "";
        width: 7px;
        height: 7px;
        border-radius: 50%;
        background: #c8c8c8;
      }
      .opt {
        margin-right: 6px;
      }
      .cb {
        width: 14px;
        height: 14px;
        border-radius: 2px;
        flex: none;
        display: flex;
        align-items: center;
        justify-content: center;
        background: #5aa2f2;
        margin: 0 3px 0 2px;
      }
      .cb svg {
        width: 10px;
        height: 10px;
      }
      .cb.off {
        background: #f2f2f2;
        border: 1px solid #bdbdbd;
        margin-left: 3px;
      }
      .grey {
        color: #999;
      }
      .grid {
        display: flex;
        height: 175px;
        overflow: hidden;
      }
      .gut {
        width: 6px;
        flex: none;
        background: #eee;
      }
      .gut div {
        height: 19px;
        border-bottom: 1px solid #d0d0d0;
        font: 12px/18px "Liberation Sans", sans-serif;
        overflow: hidden;
      }
      .gut .h1 {
        height: 18px;
      }
      .gut .h2 {
        height: 61px;
      }
      .tw {
        overflow: hidden;
        flex: 1;
      }
      table {
        border-collapse: collapse;
        table-layout: fixed;
        width: 793px;
        font-size: 12px;
      }
      col {
        width: 61px;
      }
      td {
        border: 1px solid #000;
        height: 19px;
        padding: 0;
        text-align: center;
        line-height: 14px;
        overflow: hidden;
        white-space: nowrap;
        color: #111;
      }
      tr.t1 td {
        height: 18px;
      }
      tr.t2 td {
        height: 61px;
      }
      td.b {
        font-weight: bold;
        font-size: 13px;
        white-space: normal;
        padding: 0 3px;
      }
      td.wr {
        white-space: normal;
        padding: 0 6px;
      }
      td.num {
        text-align: right;
        padding-right: 3px;
        font-family: "DejaVu Sans Mono", monospace;
        font-size: 11px;
      }
      td.num.bd {
        font-weight: bold;
        font-size: 12px;
      }
      tr.sum td {
        background: #e4e4e4;
      }
      .hs {
        position: absolute;
        left: 14px;
        top: 298px;
        width: 313px;
        height: 8px;
        border-radius: 4px;
        background: #c9c9c9;
      }
      .lowerb {
        height: 300px;
        margin: 14px 0 0 -1px;
        border: 1px solid #bdbdbd;
        border-width: 1px 2px 2px 1px;
        border-bottom-color: #888;
        border-right-color: #999;
      }
      .cap {
        height: 23px;
        line-height: 17px;
        border-bottom: 1px solid #888;
        white-space: pre;
      }
      .det {
        margin-left: 1px;
        display: grid;
        grid-template-columns: 6px 79px 159px;
        grid-template-rows: 17px 29px;
        gap: 0 1px;
        justify-content: start;
        text-align: center;
      }
      .det .h {
        background: #7fb8f8;
        color: #fff;
        font-weight: bold;
        line-height: 17px;
      }
      .det .c {
        background: #2e7fe0;
        color: #111;
        text-align: left;
        padding-left: 4px;
        line-height: 29px;
      }
      .det .pos {
        letter-spacing: 0.55px;
        white-space: nowrap;
      }
      .det .n {
        background: #7fb8f8;
        color: #fff;
        font-weight: bold;
        line-height: 29px;
        overflow: hidden;
      }
      .foot {
        height: 26px;
        margin-top: 8px;
        display: flex;
        gap: 8px;
        padding: 0 6px;
      }
      .btn {
        width: 139px;
        border: 1px solid #d0d0d0;
        border-radius: 3px;
        background: #fff;
        display: flex;
        align-items: center;
        justify-content: center;
      }
      .btn.exit {
        margin-left: auto;
        width: 80px;
        background: #2e7fe0;
        border-color: #2e7fe0;
        color: #fff;
      }
      .grip {
        position: absolute;
        right: 1px;
        bottom: 1px;
        width: 9px;
        height: 9px;
      }
    `,
  ];

  render() {
    return html`
      <div class="bar">
        <span>查看构件图元工程量</span>
        <div class="win">
          <svg viewBox="0 0 28 14"><path d="M10 11h8" stroke="#fff" stroke-width="2" /></svg>
          <svg viewBox="0 0 28 14"><rect x="10.5" y="3.5" width="7" height="7" fill="none" stroke="#fff" stroke-width="1.3" /></svg>
          <svg viewBox="0 0 28 14"><path d="M10 3l8 8M18 3l-8 8" stroke="#fff" stroke-width="1.5" /></svg>
        </div>
      </div>
      <div class="tabs">
        <div class="tab">构件工程量</div>
        <div class="tab dim">做法工程量</div>
      </div>
      <div class="panel">
        <div class="upper">
          <div class="opts">
            <span class="radio on"></span><span class="opt">清单工程量</span>
            <span class="radio"></span><span class="opt">定额工程量</span>
            <span class="cb"><svg viewBox="0 0 10 10"><path d="M1 5l3 3 5-6" fill="none" stroke="#fff" stroke-width="2" /></svg></span>
            <span class="opt">显示房间、组合构件量</span>
            <span class="cb off"><svg viewBox="0 0 10 10"><path d="M1 5l3 3 5-6" fill="none" stroke="#aaa" stroke-width="2" /></svg></span>
            <span class="grey">只显示标准层单层量</span>
          </div>
          <div class="grid">
            <div class="gut">
              <div class="h1"></div>
              <div class="h2"></div>
              <div>1</div>
              <div>2</div>
              <div>3</div>
              <div>4</div>
              <div>5</div>
            </div>
            <div class="tw">
              <table>
                <colgroup>${Array.from({ length: 13 }, () => html`<col />`)}</colgroup>
                <tr class="t1">
                  <td class="b" rowspan="2">楼层</td>
                  <td class="b" rowspan="2">名称</td>
                  <td class="b" rowspan="2">所附墙材质</td>
                  <td class="b" rowspan="2">内/外墙面标志</td>
                  <td colspan="9"></td>
                </tr>
                <tr class="t2">${HEADS.map((h) => html`<td>${h.map((l, i) => (i ? html`<br />${l}` : l))}</td>`)}</tr>
                <tr>
                  <td rowspan="4">首层</td>
                  <td class="wr" rowspan="3">内墙 [内墙面]</td>
                  <td rowspan="2">砖</td>
                  <td>内墙面</td>
                  ${cells()}
                </tr>
                <tr>
                  <td class="b">小计</td>
                  ${cells("bd")}
                </tr>
                <tr>
                  <td class="b" colspan="2">小计</td>
                  ${cells("bd")}
                </tr>
                <tr>
                  <td class="b" colspan="3">小计</td>
                  ${cells("bd")}
                </tr>
                <tr class="sum">
                  <td colspan="4">合计</td>
                  ${cells()}
                </tr>
              </table>
            </div>
          </div>
          <div class="hs"></div>
        </div>
        <div class="lowerb">
          <div class="cap">图元明细  1 (1)</div>
          <div class="det">
            <div class="h"></div>
            <div class="h">构件名称</div>
            <div class="h">位置</div>
            <div class="n">1</div>
            <div class="c">内墙</div>
            <div class="c pos">&lt;1+90,C-180&gt; &lt;3,C-180&gt;</div>
          </div>
        </div>
        <div class="foot">
          <div class="btn">设置分类及工程量</div>
          <div class="btn">导出到Excel</div>
          <div class="btn exit">退出</div>
        </div>
      </div>
      <svg class="grip" viewBox="0 0 9 9" aria-hidden="true">
        <path d="M6 0h2v2H6zM3 3h2v2H3zM6 3h2v2H6zM0 6h2v2H0zM3 6h2v2H3zM6 6h2v2H6z" fill="#777" />
      </svg>
    `;
  }
}

@customElement("cad-canvas")
export class CadCanvas extends LitElement {
  static styles = [
    BASE,
    css`
      :host {
        display: block;
        position: relative;
        height: 100%;
        background: #000;
        overflow: hidden;
      }
      .scene {
        display: block;
        width: 100%;
        height: 100%;
      }
      .strip {
        position: absolute;
        right: 0;
        top: 0;
        width: 29px;
        height: 227px;
        background: #8f9298;
        border-left: 1px solid #a8aaae;
        border-bottom: 1px solid #a8aaae;
      }
      .strip svg {
        position: absolute;
        left: 0;
        top: 0;
        width: 29px;
        height: 227px;
      }
    `,
  ];

  render() {
    const BROWN = "#b85b00";
    const ORANGE = "#e98b2e";
    const PINK = "#bd5d8c";
    const BLUE = "#1c5fe8";
    const DK = "#472a1f";
    const OLIVE = "#5a5010";
    const YEL = "#d4d226";
    const EDGE = "#d2832e";
    const rect = (x: number, y: number, w: number, h: number, f: string) =>
      svg`<rect x=${x} y=${y} width=${w} height=${h} fill=${f} />`;
    const hbeam = (x: number, y: number, w: number) =>
      svg`${rect(x, y, w, 7, EDGE)}${rect(x, y + 1.5, w, 4, YEL)}`;
    const vbeam = (x: number, y: number, h: number, w = 12) =>
      svg`${rect(x, y, w, h, EDGE)}${rect(x + 2, y, w - 4, h, YEL)}`;
    const band = (x: number, y: number, w: number, h: number) =>
      svg`${rect(x, y, w, 2, "#9a5208")}${rect(x, y + 2, w, h - 2, OLIVE)}`;
    return html`
      <svg class="scene" viewBox="497 166 1145 759" aria-hidden="true">
        <path d="M903 900v25M983 900v25" stroke="#0a7a0a" />
        <polygon points="1382,415 1391,419 1394,429 1389,438 1375,438 1370,429 1373,419" fill="none" stroke="#0a7a0a" />
        <text x="1382" y="434" text-anchor="middle" font-family="DejaVu Sans" font-size="17" fill="#fff">2</text>
        <circle cx="811" cy="928" r="5" fill="none" stroke="#0a7a0a" />
        ${rect(1031, 905, 29, 20, "#0090c8")}${rect(1060, 905, 133, 20, BROWN)}${rect(1193, 905, 64, 20, PINK)}
        ${band(1257, 436, 385, 8)}${rect(1257, 444, 385, 22, BLUE)}${rect(1257, 466, 385, 15, DK)}
        ${rect(1257, 481, 290, 119, BLUE)}${rect(1559, 481, 83, 70, BLUE)}
        <polygon points="1530,481 1547,481 1547,498" fill=${DK} />
        <polygon points="1559,481 1642,481 1642,550 1630,550 1559,502" fill=${DK} />
        ${rect(1257, 483, 72, 63, "#000")}${rect(1411, 483, 107, 63, "#000")}
        <path d="M1257 490h72M1257 541h72M1411 490h107M1411 541h107" stroke="#0a5a0a" />
        ${band(1257, 546, 72, 8)}${band(1411, 546, 107, 8)}
        ${rect(1257, 600, 290, 172, PINK)}${rect(1559, 556, 83, 22, ORANGE)}${rect(1559, 578, 83, 85, DK)}${rect(1600, 626, 42, 37, PINK)}
        ${rect(1257, 655, 37, 5, "#000")}${rect(1503, 655, 41, 5, "#000")}
        ${rect(1305, 611, 186, 160, ORANGE)}${rect(1444, 666, 198, 105, ORANGE)}
        ${rect(1447, 738, 42, 33, PINK)}${rect(1501, 738, 47, 33, PINK)}
        ${rect(1501, 738, 1.5, 33, "#5a3030")}${rect(1547, 738, 2, 33, "#472a1f")}
        <path d="M1257 762h37M1447 762h42M1502 762h45" stroke="#e0204a" />
        ${rect(1381, 600, 2, 7, "#e0204a")}${rect(1489, 764, 2, 5, "#f000e0")}
        ${band(1257, 771, 385, 8)}
        ${hbeam(1294, 607, 209)}${hbeam(1438, 663, 204)}${hbeam(1559, 550, 83)}${hbeam(1299, 724, 139)}
        ${vbeam(1294, 608, 170, 11)}${vbeam(1432, 610, 168)}${vbeam(1491, 608, 58)}${vbeam(1547, 437, 232)}
        ${rect(1257, 779, 385, 146, BROWN)}
        ${rect(1309, 816, 64, 65, ORANGE)}${band(1309, 881, 64, 7)}
        ${rect(1473, 816, 144, 109, PINK)}
        ${rect(1490, 816, 11, 4, ORANGE)}${rect(1490, 820, 11, 4, "#f000e0")}
        ${rect(1550, 816, 67, 4, ORANGE)}${rect(1550, 820, 67, 4, "#f000e0")}
        ${rect(1501, 816, 2, 4, "#472a1f")}${rect(1547, 816, 2, 4, "#472a1f")}
        ${rect(1489, 892, 128, 33, "#d874a4")}${rect(1617, 892, 25, 33, "#d0701c")}
      </svg>
      <div class="strip">
        <svg viewBox="0 0 29 227" aria-hidden="true">
          <circle cx="15" cy="20" r="9" fill="#cfd3da" stroke="#5c6470" />
          <ellipse cx="13" cy="23" rx="12" ry="5" fill="none" stroke="#5c6470" transform="rotate(-25 13 23)" />
          <circle cx="23" cy="18" r="3.5" fill="#f2f2f2" stroke="#777" />
          <rect x="4" y="40" width="23" height="23" fill="#7d8aa0" stroke="#4e5664" />
          <text x="25" y="60" text-anchor="end" font-family="Liberation Sans" font-size="8" fill="#2c3038">2D</text>
          <path d="M4 75l6-6h17v17l-6 6H4zM4 75h17v17M21 75l6-6M4 92l6-6h17M10 69v17" fill="#cfe4fc" stroke="#444c58" />
          <path d="M12 99h6l-3 3z" fill="#3d434c" />
          <path d="M4 114l6-6h17v17l-6 6H4z" fill="#7d8aa0" stroke="#444c58" />
          <path d="M4 114h17v17M21 114l6-6" fill="none" stroke="#444c58" />
          <path d="M12 138h6l-3 3z" fill="#3d434c" />
          <path d="M25 155a10 10 0 1 0 0 13" fill="none" stroke="#3d434c" stroke-width="1.5" />
          <path d="M27 150v8h-7z" fill="#3d434c" />
          <path d="M12 177h6l-3 3z" fill="#3d434c" />
          <path d="M5 186h24" stroke="#b8babd" />
          <rect x="4" y="191" width="23" height="22" rx="1" fill="#8f98a8" stroke="#444c58" />
          <path d="M4 195h23M15.5 195v18M7 199h3v2H7zM7 203h3v2H7zM7 207h3v2H7zM18 199h3v2h-3zM18 203h3v2h-3zM18 207h3v2h-3zM11 200h2M11 204h2M11 208h2M22 200h3M22 204h3M22 208h3" fill="none" stroke="#2c3038" stroke-width=".7" />
        </svg>
      </div>
    `;
  }
}

@customElement("app-root")
export class AppRoot extends LitElement {
  static styles = css`
    :host {
      display: block;
      position: relative;
      width: 1642px;
      height: 925px;
      overflow: hidden;
      background: #fff;
      font-family: "Noto Sans CJK SC", "Liberation Sans", sans-serif;
    }
    .main {
      display: flex;
      height: 759px;
    }
    .nav {
      width: 210px;
      flex: none;
    }
    .side {
      width: 287px;
      flex: none;
    }
    .canvas {
      flex: 1;
      min-width: 0;
    }
  `;

  render() {
    return html`
      <ribbon-bar></ribbon-bar>
      <div class="main">
        <nav-tree class="nav"></nav-tree>
        <side-panels class="side"></side-panels>
        <cad-canvas class="canvas"></cad-canvas>
      </div>
      <qty-dialog></qty-dialog>
    `;
  }
}
